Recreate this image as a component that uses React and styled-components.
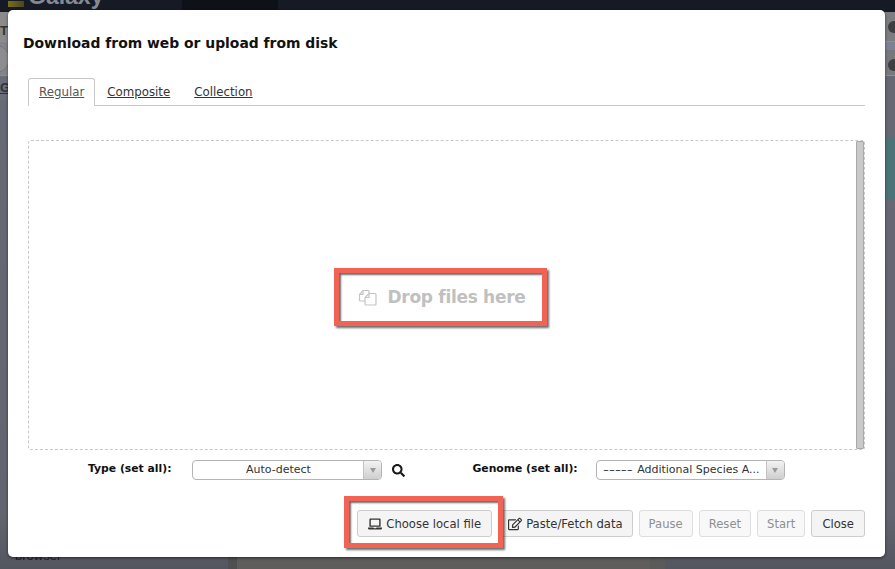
import React from 'react';
import styled, { createGlobalStyle } from 'styled-components';
import { FaLaptop, FaRegEdit, FaSearch } from 'react-icons/fa';

const GlobalStyle = createGlobalStyle`
  html, body {
    margin: 0;
    padding: 0;
    background: #5c5d66;
  }
  body {
    font-family: "DejaVu Sans", Verdana, sans-serif;
    color: #222;
  }
`;

const Page = styled.div`
  position: relative;
  width: 895px;
  height: 569px;
  overflow: hidden;
  display: flex;
  flex-direction: column;
`;

const Navbar = styled.div`
  height: 12px;
  flex: none;
  background: #161a25;
  display: flex;
  overflow: hidden;
`;

const NavLogo = styled.div`
  width: 16px;
  height: 6px;
  margin: 1px 0 0 8px;
  background: linear-gradient(90deg, #7a7016, #4a4620);
`;

const Brand = styled.div`
  margin: -17px 0 0 4px;
  font: bold 23px "Liberation Sans", sans-serif;
  color: #858992;
  width: 88px;
`;

const NavActive = styled.div`
  width: 96px;
  margin-left: 66px;
  height: 10px;
  background: #0f1118;
`;

const Body = styled.div`
  flex: 1;
  display: grid;
  grid-template-columns: 228px 9px 413px 15px 1fr;
`;

const Side = styled.div`
  background: linear-gradient(#686b78, #62656f 90%, #54565f);
  display: flex;
  flex-direction: column;
`;

const Divider = styled.div`
  background: ${p => p.$color};
`;

const SideRow = styled.div`
  height: ${p => p.$h}px;
  background: ${p => p.$bg};
  border-bottom: ${p => (p.$line ? '1px solid #8e8f95' : 'none')};
  box-sizing: border-box;
  font: bold 13px "Liberation Sans", sans-serif;
  color: #333;
  padding-top: ${p => p.$pt || 0}px;
  text-decoration: ${p => (p.$under ? 'underline' : 'none')};
  display: flex;
  justify-content: ${p => (p.$end ? 'flex-end' : 'flex-start')};
  overflow: hidden;
`;

const RowCircle = styled.span`
  width: 26px;
  height: 26px;
  margin: 3px 0 0 -18px;
  border-radius: 50%;
  border: 1px solid #777;
  background: #8d8d90;
  flex: none;
`;

const RowGlyph = styled.span`
  width: 12px;
  height: 12px;
  margin: 9px -5px 0 0;
  border-radius: 50%;
  background: #3e3e42;
  flex: none;
`;

const SideSpacer = styled.div`
  flex: 1;
`;

const SideText = styled.div`
  font: 13px "Liberation Sans", sans-serif;
  color: #1f2026;
  padding-left: 15px;
  height: 21px;
`;

const Modal = styled.div`
  position: absolute;
  left: 8px;
  top: 10px;
  width: 877px;
  height: 547px;
  box-sizing: border-box;
  padding: 0 20px;
  background: #fff;
  border-radius: 5px;
  box-shadow: 0 1px 3px rgba(0, 0, 0, 0.55);
  display: flex;
  flex-direction: column;
`;

const Title = styled.h2`
  margin: 24px 0 0 -5px;
  height: 18px;
  font-size: 13.9px;
  line-height: 18px;
  font-weight: bold;
  color: #111;
`;

const Tabs = styled.div`
  margin-top: 26px;
  height: 27px;
  border-bottom: 1px solid #c9c9c9;
  display: flex;
`;

const Tab = styled.a`
  height: 28px;
  box-sizing: border-box;
  padding: 6px 10px 0;
  margin-right: ${p => (p.$active ? '1px' : '2px')};
  font-size: 11.8px;
  line-height: 15px;
  color: ${p => (p.$active ? '#555' : '#333')};
  text-decoration: underline;
  background: ${p => (p.$active ? '#fff' : 'transparent')};
  border: 1px solid ${p => (p.$active ? '#c9c9c9' : 'transparent')};
  border-bottom: none;
  border-radius: 3px 3px 0 0;
`;

const DropBox = styled.div`
  margin-top: 34px;
  height: 310px;
  box-sizing: border-box;
  border: 1px dashed #c8c8c8;
  border-radius: 3px;
  display: flex;
`;

const DropArea = styled.div`
  flex: 1;
  display: flex;
  align-items: center;
  justify-content: center;
  padding-top: 3px;
`;

const DropHint = styled.div`
  position: relative;
  display: flex;
  align-items: center;
  gap: 10px;
  font-size: 17px;
  letter-spacing: -0.3px;
  font-weight: bold;
  color: #c0c0c0;
  margin-left: -2px;
`;

const Highlight = styled.span`
  position: absolute;
  z-index: 1;
  left: ${p => p.$l}px;
  right: ${p => p.$r}px;
  top: ${p => p.$t}px;
  bottom: ${p => p.$b}px;
  border: 5px solid #f26355;
  box-shadow: 2px 2px 2px rgba(60, 60, 60, 0.75), inset 2px 2px 2px rgba(60, 60, 60, 0.75);
  pointer-events: none;
`;

const Scrollbar = styled.div`
  width: 8px;
  flex: none;
  background: #c9c9c9;
  border: 1px solid #a9a9a9;
  border-radius: 1px;
  box-sizing: border-box;
`;

const Options = styled.div`
  margin-top: 10px;
  height: 20px;
  display: flex;
  align-items: center;
`;

const OptionLabel = styled.span`
  font-size: 10.8px;
  font-weight: bold;
  color: #111;
  margin-left: ${p => p.$ml}px;
  margin-right: ${p => p.$mr}px;
  white-space: nowrap;
  margin-top: -3px;
`;

const Select = styled.div`
  width: ${p => p.$w}px;
  height: 20px;
  box-sizing: border-box;
  border: 1px solid #b4b4b4;
  border-radius: 4px;
  display: flex;
  background: #fff;
  overflow: hidden;
`;

const SelectValue = styled.div`
  flex: 1;
  font-size: 11px;
  line-height: 18px;
  color: #333;
  text-align: center;
  white-space: nowrap;
`;

const Dashes = styled.span`
  display: inline-block;
  transform: scaleX(1.5);
  transform-origin: left center;
  margin-right: 11px;
`;

const SelectArrow = styled.div`
  width: 17px;
  flex: none;
  border-left: 1px solid #c4c4c4;
  background: linear-gradient(#f2f2f2, #cfcfcf);
  display: flex;
  align-items: center;
  justify-content: center;

  &::after {
    content: '';
    border-left: 3px solid transparent;
    border-right: 3px solid transparent;
    border-top: 5px solid #9a9a9a;
  }
`;

const SearchIcon = styled(FaSearch)`
  width: 13px;
  height: 13px;
  margin-left: 10px;
  color: #1a1a1a;
`;

const Buttons = styled.div`
  margin-top: 30px;
  display: flex;
  justify-content: flex-end;
  gap: 6px;
`;

const Button = styled.button`
  position: relative;
  height: 27px;
  box-sizing: border-box;
  padding: 0 ${p => p.$px || 10}px;
  font-family: inherit;
  font-size: 11.6px;
  color: ${p => (p.disabled ? '#8f8f8f' : '#333')};
  background: ${p => (p.disabled ? '#f8f8f8' : '#f4f4f4')};
  border: 1px solid ${p => (p.disabled ? '#dedede' : '#cdcdcd')};
  border-radius: 3px;
  display: flex;
  align-items: center;
  gap: 4px;
  white-space: nowrap;
`;

const FilesIcon = () => (
  <svg width="20" height="18" viewBox="0 0 20 18" fill="none" stroke="#c4c4c4" strokeWidth="1.2">
    <path d="M7 13H2.5a1 1 0 0 1-1-1V6.5L5 2.5h5a1 1 0 0 1 1 1V5" />
    <path d="M1.5 6.5H5V2.5" />
    <path d="M8 17a1 1 0 0 1-1-1V9.5L11 5.5h6a1 1 0 0 1 1 1V16a1 1 0 0 1-1 1z" />
    <path d="M7 9.5h4V5.5" />
  </svg>
);

const App = () => (
  <Page>
    <GlobalStyle />
    <Navbar>
      <NavLogo />
      <Brand>Galaxy</Brand>
      <NavActive />
    </Navbar>
    <Body>
      <Side>
        <SideRow $h={30} $bg="#8b8b8b" $line $pt={11}>T</SideRow>
        <SideRow $h={34} $bg="#84858c" $line><RowCircle /></SideRow>
        <SideRow $h={24} $bg="#6b6d7a" $under $pt={4}>G</SideRow>
        <SideSpacer />
        <SideText>browser</SideText>
      </Side>
      <Divider $color="#4f4f52" />
      <Divider $color="#5e5d5b" />
      <Divider $color="#5a5a58" />
      <Side>
        <SideRow $h={30} $bg="#7c7d80" $line $end><RowGlyph /></SideRow>
        <SideRow $h={8} $bg="#7d8194" />
        <SideRow $h={26} $bg="#77787c" $line $end><RowGlyph /></SideRow>
        <SideRow $h={61} $bg="#666874" />
        <SideRow $h={63} $bg="#4c7478" />
        <SideSpacer />
      </Side>
    </Body>

    <Modal>
      <Title>Download from web or upload from disk</Title>
      <Tabs>
        <Tab $active>Regular</Tab>
        <Tab>Composite</Tab>
        <Tab>Collection</Tab>
      </Tabs>
      <DropBox>
        <DropArea>
          <DropHint>
            <Highlight $l={-24} $r={-22} $t={-19} $b={-19} />
            <FilesIcon />
            Drop files here
          </DropHint>
        </DropArea>
        <Scrollbar />
      </DropBox>
      <Options>
        <OptionLabel $ml={60} $mr={21}>Type (set all):</OptionLabel>
        <Select $w={190}>
          <SelectValue>Auto-detect</SelectValue>
          <SelectArrow />
        </Select>
        <SearchIcon />
        <OptionLabel $ml={67} $mr={18}>Genome (set all):</OptionLabel>
        <Select $w={189}>
          <SelectValue><Dashes>-----</Dashes> Additional Species A...</SelectValue>
          <SelectArrow />
        </Select>
      </Options>
      <Buttons>
        <Button>
          <Highlight $l={-14} $r={-12} $t={-15} $b={-12} />
          <FaLaptop size={14} />
          Choose local file
        </Button>
        <Button $px={9}>
          <FaRegEdit size={14} />
          Paste/Fetch data
        </Button>
        <Button disabled $px={9}>Pause</Button>
        <Button disabled $px={9}>Reset</Button>
        <Button disabled $px={9}>Start</Button>
        <Button $px={10}>Close</Button>
      </Buttons>
    </Modal>
  </Page>
);

export default App;
